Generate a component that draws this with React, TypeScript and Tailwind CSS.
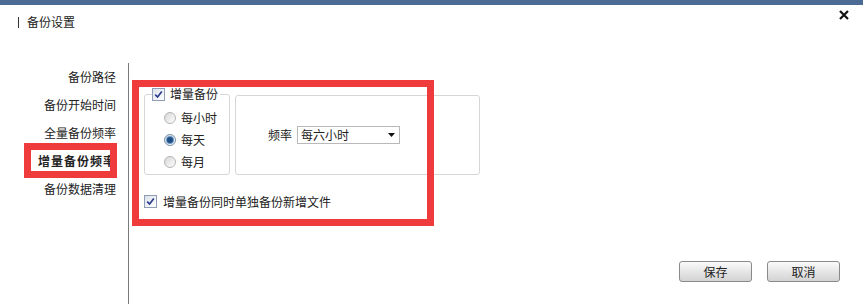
import React from 'react';

const font = { fontFamily: '"Noto Sans CJK SC", "Liberation Sans", sans-serif' };

function Check() {
  return (
    <span className="flex h-[13px] w-[13px] shrink-0 items-center justify-center border border-[#8e9cb6] bg-linear-to-br from-[#dce1ea] to-white">
      <svg width="9" height="9" viewBox="0 0 9 9">
        <path d="M1.2 4.6 L3.6 7 L7.8 1.6" fill="none" stroke="#2b3d8c" strokeWidth="1.7" />
      </svg>
    </span>
  );
}

function Radio({ checked }: { checked?: boolean }) {
  return (
    <span
      className={
        checked
          ? 'flex h-[12px] w-[12px] items-center justify-center rounded-full border border-[#7a8fa8] bg-linear-to-br from-[#cfd8e3] to-white'
          : 'flex h-[12px] w-[12px] items-center justify-center rounded-full border border-[#b4b4b4] bg-linear-to-br from-[#d6d6d6] to-white'
      }
    >
      {checked && <span className="h-[6px] w-[6px] rounded-full bg-[#1f4d85] shadow-[0_0_0_1px_#6f9ac6]" />}
    </span>
  );
}

const navItems = ['备份路径', '备份开始时间', '全量备份频率', '增量备份频率', '备份数据清理'];

export default function App() {
  return (
    <div className="flex h-[304px] w-[863px] flex-col bg-white text-[12px] text-[#222]" style={font}>
      {/* Top bar */}
      <div className="h-[5px] bg-[#4b6a94]" />

      {/* Header */}
      <div className="flex h-[58px] items-start justify-between">
        <div className="mt-[9px] flex items-center pl-[18px] leading-[16px]">
          <span className="h-[11px] w-px bg-[#333]" />
          <span className="ml-[8px]">备份设置</span>
        </div>
        <svg className="mt-[5px] mr-[14px]" width="10" height="10" viewBox="0 0 10 10">
          <path d="M1 1 L9 9 M9 1 L1 9" stroke="#111" strokeWidth="2.2" />
        </svg>
      </div>

      {/* Body */}
      <div className="flex flex-1">
        {/* Left nav */}
        <div className="w-[129px] border-r border-[#7a7a7a] pr-[12px]">
          {navItems.map((item, i) => (
            <div key={item} className="relative h-[28px] text-right leading-[28px]">
              {i === 3 ? (
                <>
                  <span className="font-bold tracking-[1px]">{item}</span>
                  <span className="absolute top-[-4px] left-[24px] h-[35px] w-[93px] border-[7px] border-[#ef3b3b]" />
                </>
              ) : (
                item
              )}
            </div>
          ))}
        </div>

        {/* Main */}
        <div className="relative flex flex-1 flex-col pt-[24px] pl-[15px]">
          <div className="flex items-start gap-[5px]">
            <fieldset className="w-[86px] rounded-[3px] border border-[#d6d6d6] pb-px">
              <legend className="ml-[7px] flex h-[14px] items-center gap-[5px] pr-[2px] leading-[14px]">
                <Check />
                <span>增量备份</span>
              </legend>
              <div className="flex flex-col pt-[6px] pl-[19px]">
                {[
                  ['每小时', false],
                  ['每天', true],
                  ['每月', false],
                ].map(([label, on]) => (
                  <div key={label as string} className="flex h-[22px] items-center gap-[5px]">
                    <Radio checked={on as boolean} />
                    <span>{label as string}</span>
                  </div>
                ))}
              </div>
            </fieldset>

            <div className="mt-[8px] flex h-[80px] w-[245px] items-center rounded-[3px] border border-[#d6d6d6] pl-[32px]">
              <span>频率</span>
              <div className="ml-[5px] flex h-[18px] w-[103px] items-center justify-between border border-[#b9b9b9] bg-white pr-[4px] pl-[3px] leading-[16px]">
                <span>每六小时</span>
                <svg width="7" height="4" viewBox="0 0 7 4">
                  <path d="M0 0 H7 L3.5 4 Z" fill="#111" />
                </svg>
              </div>
            </div>
          </div>

          <div className="mt-[20px] flex h-[13px] items-center gap-[6px]">
            <Check />
            <span>增量备份同时单独备份新增文件</span>
          </div>

          <div className="mt-[53px] flex justify-end gap-[15px] pr-[23px]">
            {['保存', '取消'].map((b) => (
              <button
                key={b}
                className="flex h-[21px] w-[73px] items-center justify-center rounded-[3px] border border-[#8a8a8a] bg-linear-to-b from-[#fafafa] to-[#d3d3d3] leading-[16px]"
              >
                {b}
              </button>
            ))}
          </div>

          {/* Annotation box */}
          <span className="absolute top-[17px] left-[3px] h-[146px] w-[302px] border-[7px] border-[#ef3b3b]" />
        </div>
      </div>
    </div>
  );
}
